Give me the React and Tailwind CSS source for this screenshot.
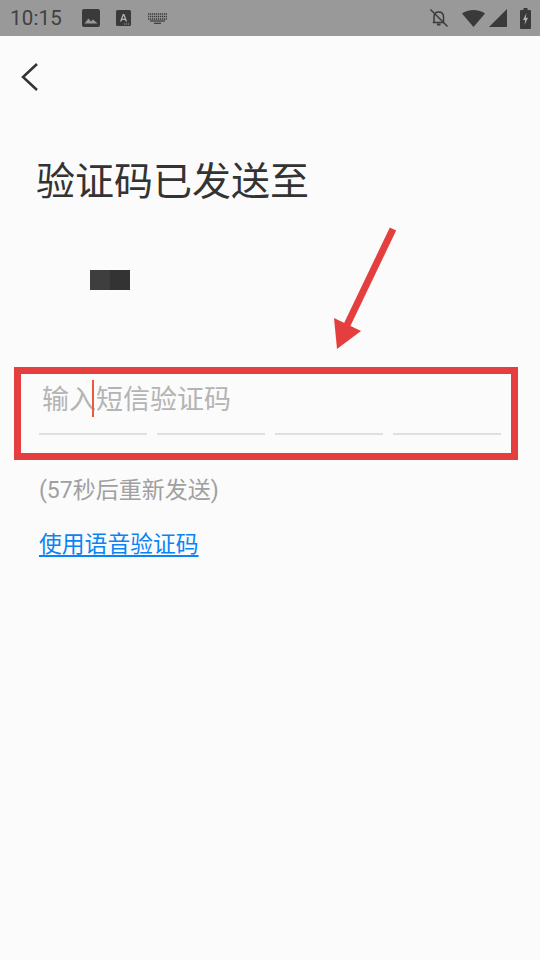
import React from "react";

function StatusBar() {
  return (
    <div className="h-9 bg-[#999999] flex items-center pl-[10px] pr-[9px]">
      <span className="text-[20.500px] leading-none font-['Roboto',sans-serif] tracking-[0.2px] text-[#404040] w-[72px]">10:15</span>
      <svg width="18" height="18" viewBox="0 0 18 18">
        <path d="M2 0h14a2 2 0 0 1 2 2v14a2 2 0 0 1-2 2H2a2 2 0 0 1-2-2V2a2 2 0 0 1 2-2z" fill="#3a3a3a" />
        <path d="M2.500 14.500l4-5 2.500 3 2-2 4.500 4z" fill="#999999" />
      </svg>
      <svg width="16" height="17" viewBox="0 0 16 17" className="ml-[16px]">
        <rect width="15" height="16" rx="1.500" fill="#3a3a3a" />
        <path d="M4 11.500L6.800 4h1.500l2.800 7.500H9.700L9.100 10H6L5.400 11.500zM6.400 8.800h2.300L7.550 5.600z" fill="#b5b5b5" />
        <rect x="8" y="13.500" width="1.200" height="1" fill="#999" />
        <rect x="10" y="13.500" width="1.200" height="1" fill="#999" />
        <rect x="12" y="13.500" width="1.200" height="1" fill="#999" />
      </svg>
      <svg width="19" height="11" viewBox="0 0 19 11" className="ml-[16px]" fill="none" stroke="#3a3a3a">
        <path d="M0 1h19M0 3.500h19M0 6h19" strokeDasharray="1.300 0.700" strokeWidth="1.300" />
        <path d="M2 8h15" strokeWidth="1.200" />
        <path d="M6 10.300h7" strokeWidth="1.200" />
      </svg>
      <div className="ml-auto flex items-center">
        <svg width="20" height="20" viewBox="0 0 20 20" fill="none" stroke="#3a3a3a" strokeWidth="1.500">
          <path d="M5 14.500V9c0-3 2-5 4.800-5S14.500 6 14.500 9v5.500H3.800" />
          <path d="M8 16.500h3.500" strokeWidth="2" />
          <path d="M1.500 1.500L18.500 18.500" />
        </svg>
        <svg width="23" height="17" viewBox="0 0 23 17" fill="#3a3a3a" className="ml-[13px]">
          <path d="M11.500 17L0 3.500C3 1.200 7 0 11.500 0S20 1.200 23 3.500z" />
        </svg>
        <svg width="19" height="18" viewBox="0 0 19 18" fill="#3a3a3a" className="ml-[4px]">
          <path d="M18 0v18H0z" />
        </svg>
        <svg width="11" height="21" viewBox="0 0 11 21" className="ml-[12px]">
          <path d="M3.500 0h4v2H10a1 1 0 0 1 1 1v17a1 1 0 0 1-1 1H1a1 1 0 0 1-1-1V3a1 1 0 0 1 1-1h2.500z" fill="#3a3a3a" />
          <path d="M6.500 5L3 12h2.200L4.500 17 8 9.800H5.800z" fill="#b0b0b0" />
        </svg>
      </div>
    </div>
  );
}

export default function App() {
  const fields = [0, 1, 2, 3];
  return (
    <div className="w-[540px] h-[960px] bg-[#fbfbfb] relative overflow-hidden font-['Roboto','Noto_Sans_CJK_SC',sans-serif]">
      <StatusBar />

      <div className="pt-[27px] pl-[21px]">
        <svg width="17" height="28" viewBox="0 0 17 28" fill="none" stroke="#333333" strokeWidth="2.500" className="block">
          <path d="M16 1L2 14l14 13" />
        </svg>
      </div>

      <h1 className="mt-[66px] ml-[36px] text-[39px] leading-[50px] font-normal text-[#333333]">验证码已发送至</h1>

      <div className="mt-[63px] ml-[90px] w-10 h-5 flex">
        <div className="w-[20px] bg-[#3e3e3e]" />
        <div className="w-[20px] bg-[#333333]" />
      </div>

      <div className="mt-[77px] ml-[14px] w-[504px] h-[93px] border-[7px] border-[#e53e3e] relative pl-[18px] pr-[10px]">
        <div className="pt-[7px] pl-[3px] text-[27px] leading-[38px] text-[#b4b4b4]">输入短信验证码</div>
        <div className="absolute left-[71px] top-[6px] w-[2px] h-[37px] bg-[#f0583c]" />
        <div className="mt-[14px] flex gap-[9.500px]">
          {fields.map((f) => (
            <div key={f} className="w-[108.500px] h-[2px] bg-[#e0e0e0]" />
          ))}
        </div>
      </div>

      <p className="mt-[15px] ml-[39px] text-[23px] leading-[32px] text-[#a0a0a0]">(57秒后重新发送)</p>
      <a className="block mt-[22px] ml-[39px] w-fit text-[22.800px] leading-[32px] text-[#0a84f5] underline underline-offset-[3px]">使用语音验证码</a>

      <svg width="70" height="130" viewBox="0 0 70 130" className="absolute left-[330px] top-[225px]">
        <path d="M63 4L17 100" stroke="#e53e3e" strokeWidth="7" fill="none" />
        <path d="M4 93L31 106 7 124z" fill="#e53e3e" />
      </svg>
    </div>
  );
}
